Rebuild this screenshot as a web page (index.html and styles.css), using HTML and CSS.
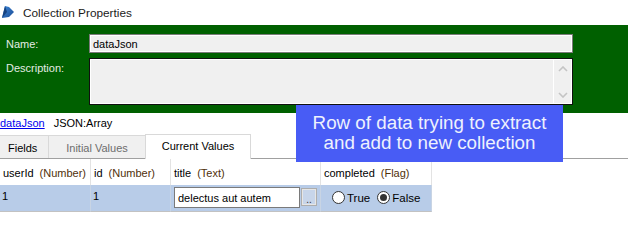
FILE: index.html
```html
<!DOCTYPE html>
<html lang="en">
<head>
    <meta charset="UTF-8">
    <title>Collection Properties</title>
    <link rel="stylesheet" href="styles.css">
</head>
<body>

    <div id="window">
        <!-- Title bar -->
        <div class="titlebar">
            <svg class="app-icon" width="14" height="13" viewBox="0 0 14 13">
                <defs>
                    <linearGradient id="gem" x1="0" y1="0" x2="1" y2="1">
                        <stop offset="0" stop-color="#3d86d8"/>
                        <stop offset="1" stop-color="#1a4c94"/>
                    </linearGradient>
                </defs>
                <path d="M3 0 L7 1 L12 6 L7 11 L0 12 Z" fill="url(#gem)"/>
                <path d="M3 0 L5 6 L0 12 Z" fill="#16427f"/>
            </svg>
            <span>Collection Properties</span>
        </div>

        <!-- Name / description -->
        <div class="props">
            <label class="prop-label">Name:</label>
            <div class="name-box">dataJson</div>
            <label class="prop-label">Description:</label>
            <div class="desc-box">
                <div class="desc-scroll">
                    <svg width="10" height="6" viewBox="0 0 10 6"><path d="M1 5 L5 1 L9 5" fill="none" stroke="#c4c4c4" stroke-width="1.6"/></svg>
                    <svg width="10" height="6" viewBox="0 0 10 6"><path d="M1 1 L5 5 L9 1" fill="none" stroke="#c4c4c4" stroke-width="1.6"/></svg>
                </div>
            </div>
        </div>

        <div class="type-row">
            <a href="#" class="type-link">dataJson</a>
            <span>JSON:Array</span>
        </div>

        <!-- Tabs -->
        <div class="tabs">
            <div class="tab">Fields</div>
            <div class="tab disabled">Initial Values</div>
            <div class="tab active">Current Values</div>
        </div>

        <!-- Values grid -->
        <div class="grid">
            <div class="cell head">userId<span class="kind">(Number)</span></div>
            <div class="cell head">id<span class="kind">(Number)</span></div>
            <div class="cell head">title<span class="kind">(Text)</span></div>
            <div class="cell head">completed<span class="kind">(Flag)</span></div>

            <div class="cell row">1</div>
            <div class="cell row">1</div>
            <div class="cell row edit">
                <div class="text-input">delectus aut autem</div>
                <div class="dots">..</div>
            </div>
            <div class="cell row flags">
                <span class="radio"></span><span>True</span>
                <span class="radio checked"></span><span>False</span>
            </div>
        </div>

        <!-- Annotation -->
        <div class="callout">Row of data trying to extract<br>and add to new collection</div>
    </div>

</body>
</html>
```

FILE: styles.css
```css
* {
    margin: 0;
    padding: 0;
    box-sizing: border-box;
}

body {
    background-color: #ffffff;
    font-family: "Liberation Sans", Arial, sans-serif;
    font-size: 11px;
    color: #000000;
    overflow: hidden;
}

#window {
    position: relative;
    width: 628px;
    height: 252px;
}

.titlebar {
    height: 25px;
    display: flex;
    align-items: center;
    gap: 7px;
    padding-left: 2px;
    font-size: 11.8px;
    color: #1a1a1a;
}

.app-icon {
    margin-top: -1px;
}

.props {
    height: 88px;
    background-color: #006000;
    display: grid;
    grid-template-columns: 83px 484px;
    grid-template-rows: 19px 47px;
    row-gap: 5px;
    padding: 9px 0 0 6px;
}

.prop-label {
    color: #e4ece4;
    padding-top: 4px;
}

.name-box {
    background-color: #f0f0f0;
    border: 1px solid #7a7a7a;
    box-shadow: inset 0 0 0 1px #ffffff;
    padding: 3px 0 0 3px;
    color: #000000;
}

.desc-box {
    background-color: #f0f0f0;
    border: 1px solid #101010;
    box-shadow: inset 0 0 0 1px #ffffff;
    display: flex;
    justify-content: flex-end;
}

.desc-scroll {
    width: 18px;
    margin: 1px 1px 1px 0;
    border-left: 1px solid #ffffff;
    display: flex;
    flex-direction: column;
    justify-content: space-between;
    align-items: center;
    padding: 6px 0 5px;
}

.type-row {
    height: 18px;
    display: flex;
    align-items: center;
    gap: 9px;
    padding-top: 1px;
}

.type-link {
    color: #0000ee;
}

.tabs {
    height: 28px;
    display: flex;
    align-items: flex-end;
    border-bottom: 1px solid #a0a0a0;
}

.tab {
    height: 23px;
    padding: 1px 8px 0;
    display: flex;
    align-items: center;
    background-color: #f0f0f0;
    border: 1px solid #d9d9d9;
    border-bottom: none;
    margin-right: -1px;
}

.tab:first-child {
    width: 49px;
    border-left: none;
}

.tab.disabled {
    width: 98px;
    color: #6d6d6d;
    justify-content: center;
}

.tab.active {
    width: 106px;
    height: 25px;
    background-color: #ffffff;
    justify-content: center;
    margin-bottom: -1px;
    padding-bottom: 3px;
}

.grid {
    display: grid;
    grid-template-columns: 91px 80px 150px 111px;
    grid-template-rows: 26px 27px;
}

.cell {
    border-right: 1px solid #e3e3e3;
    padding-left: 2px;
    display: flex;
    align-items: center;
    white-space: nowrap;
}

.cell.head {
    padding-left: 3px;
    padding-top: 1px;
}

.kind {
    color: #50300a;
    margin-left: 6px;
}

.cell.row {
    background-color: #b8cce8;
    border-bottom: 1px solid #c2c2c2;
    border-right-color: #c8d4e4;
    align-items: flex-start;
    padding-top: 5px;
}

.cell.edit {
    padding: 2px 0 0 3px;
    gap: 1px;
}

.text-input {
    width: 126px;
    height: 21px;
    background-color: #ffffff;
    border: 1px solid #7a7a7a;
    padding: 4px 0 0 3px;
}

.dots {
    width: 16px;
    height: 18px;
    margin-top: 1px;
    background-color: #c7d5ea;
    border: 1px solid #adadad;
    box-shadow: inset 0 0 0 1px #e6e6e6;
    font-size: 10px;
    display: flex;
    justify-content: center;
    align-items: flex-end;
    color: #333333;
}

.cell.flags {
    align-items: center;
    padding: 0 0 1px 11px;
    font-size: 11.5px;
}

.radio {
    width: 13px;
    height: 13px;
    border-radius: 50%;
    border: 1px solid #333333;
    background-color: #ffffff;
    margin-right: 2px;
    display: flex;
    justify-content: center;
    align-items: center;
}

.radio.checked {
    margin-left: 7px;
}

.radio.checked::after {
    content: "";
    width: 7px;
    height: 7px;
    border-radius: 50%;
    background-color: #333333;
}

/* annotation box laid over the form */
.callout {
    position: absolute;
    left: 296px;
    top: 105px;
    width: 267px;
    height: 57px;
    background-color: #485cf5;
    color: #eef1fd;
    font-size: 18.8px;
    line-height: 20px;
    text-align: center;
    padding-top: 8px;
}
```
